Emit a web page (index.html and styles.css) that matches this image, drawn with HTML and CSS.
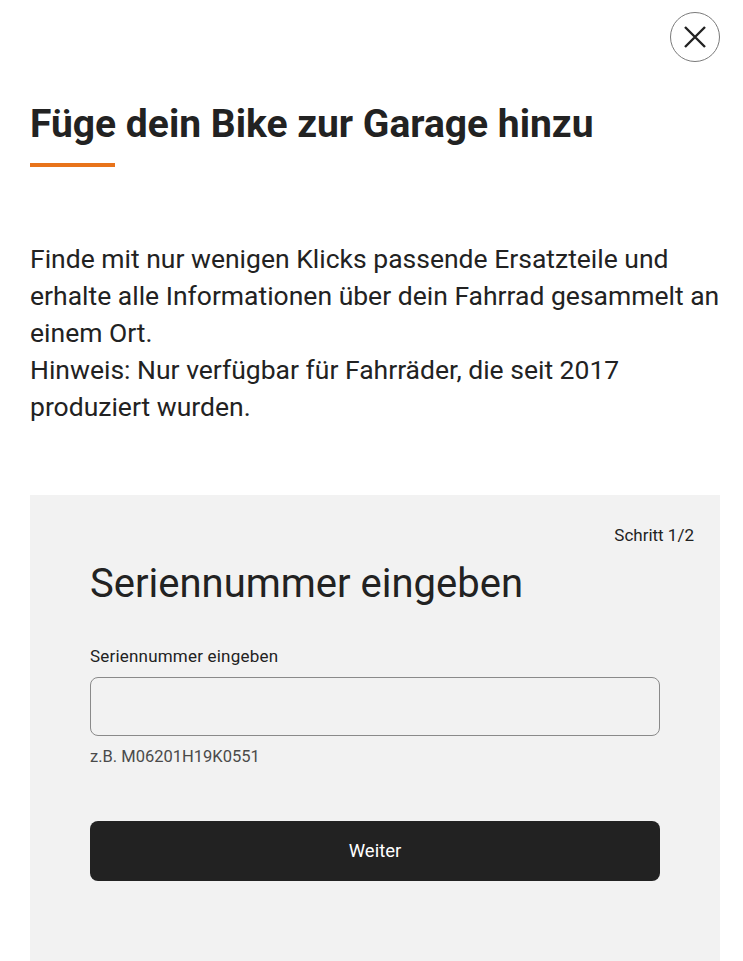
FILE: index.html
```html
<!DOCTYPE html>
<html lang="de">
<head>
<meta charset="utf-8">
<title>Bike zur Garage hinzufügen</title>
<link rel="stylesheet" href="styles.css">
</head>
<body>
<div class="page">
  <div class="topbar">
    <button class="close" aria-label="Schließen">
      <svg width="24" height="24" viewBox="0 0 24 24"><path d="M2 2L22 22M22 2L2 22" stroke="#222" stroke-width="2.4" fill="none" stroke-linecap="butt"/></svg>
    </button>
  </div>
  <h1 class="title">Füge dein Bike zur Garage hinzu</h1>
  <div class="accent"></div>
  <p class="intro">Finde mit nur wenigen Klicks passende Ersatzteile und erhalte alle Informationen über dein Fahrrad gesammelt an einem Ort.<br>Hinweis: Nur verfügbar für Fahrräder, die seit 2017 produziert wurden.</p>
  <section class="card">
    <div class="step">Schritt 1/2</div>
    <div class="form">
      <h2 class="form-title">Seriennummer eingeben</h2>
      <label class="label" for="sn">Seriennummer eingeben</label>
      <input class="input" id="sn" type="text">
      <div class="hint">z.B. M06201H19K0551</div>
      <button class="submit">Weiter</button>
    </div>
  </section>
</div>
</body>
</html>
```
FILE: styles.css
```css
html, body {
  margin: 0;
  padding: 0;
  background: #fff;
}
body {
  font-family: Roboto, "Liberation Sans", sans-serif;
  color: #222;
}
.page {
  padding: 12px 23px 0 30px;
  display: flex;
  flex-direction: column;
}
.topbar {
  display: flex;
  justify-content: flex-end;
}
.close {
  width: 50px;
  height: 50px;
  border: 1px solid #7a7a7a;
  border-radius: 50%;
  background: #fff;
  padding: 0;
  display: flex;
  align-items: center;
  justify-content: center;
}
.title {
  margin: 38px 0 0;
  font-size: 39px;
  line-height: 48px;
  font-weight: 700;
  color: #222;
}
.accent {
  margin-top: 15px;
  width: 85px;
  height: 4px;
  background: #e8731a;
}
.intro {
  margin: 73px -10px 0 0;
  font-size: 26.5px;
  line-height: 37px;
  color: #222;
}
.card {
  margin-top: 70px;
  background: #f2f2f2;
  padding: 30px 26px 80px 60px;
  display: flex;
  flex-direction: column;
}
.step {
  align-self: flex-end;
  font-size: 17px;
  line-height: 20px;
}
.form {
  margin-right: 34px;
  display: flex;
  flex-direction: column;
}
.form-title {
  margin: 15px 0 0;
  font-size: 40px;
  line-height: 48px;
  font-weight: 400;
}
.label {
  margin-top: 38px;
  font-size: 17px;
  line-height: 20px;
  letter-spacing: 0.2px;
}
.input {
  margin-top: 11px;
  height: 59px;
  box-sizing: border-box;
  border: 1px solid #8a8a8a;
  border-radius: 8px;
  background: #f2f2f2;
  font-family: inherit;
  font-size: 17px;
  padding: 0 16px;
}
.hint {
  margin-top: 11px;
  font-size: 16.5px;
  line-height: 20px;
  color: #4a4a4a;
}
.submit {
  margin-top: 54px;
  height: 60px;
  border: 0;
  border-radius: 8px;
  background: #222;
  color: #fff;
  font-family: inherit;
  font-size: 18.5px;
}
```
